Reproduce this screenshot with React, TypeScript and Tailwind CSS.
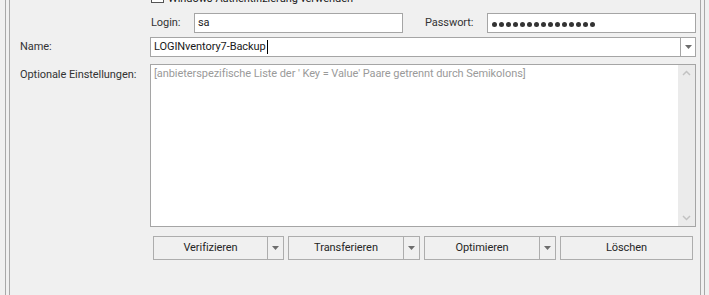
import React from 'react';

const font = { fontFamily: 'Roboto, "Liberation Sans", sans-serif' };

const Caret: React.FC = () => (
  <svg width="7" height="4" viewBox="0 0 7 4" className="shrink-0">
    <path d="M0 0h7L3.5 4z" fill="#6d6d6d" />
  </svg>
);

const SplitButton: React.FC<{ label: string; w: string }> = ({ label, w }) => (
  <div className={`flex h-[24px] ${w} border border-[#adadad] bg-[#f0f0f0]`}>
    <div className="flex flex-1 items-center justify-center text-[#262626]">{label}</div>
    <div className="flex w-[16px] items-center justify-center border-l border-[#adadad]">
      <Caret />
    </div>
  </div>
);

export default function App() {
  return (
    <div
      className="flex h-[295px] w-[709px] overflow-hidden bg-[#f0f0f0] text-[11px] leading-[14px] tracking-[-0.07px] text-[#333]"
      style={font}
    >
      {/* left panel edge */}
      <div className="ml-[5px] w-[5px] shrink-0 border-x border-[#a8a8a8]" />

      <div className="flex flex-1 flex-col pl-[10px] pr-[4px]">
        {/* checkbox row, mostly scrolled out of view */}
        <div className="-mt-[10px] flex h-[13px] items-start pl-[131px]">
          <div className="h-[13px] w-[13px] shrink-0 border border-[#555] bg-white" />
          <span className="ml-[4px] mt-[2px] whitespace-nowrap text-[#1a1a1a]">
            Windows-Authentifizierung verwenden
          </span>
        </div>

        {/* credentials */}
        <div className="mt-[10px] flex h-[20px] items-center pl-[130px]">
          <span className="ml-[1px] w-[43px]">Login:</span>
          <div className="flex h-[20px] w-[209px] items-center border border-[#a5a5a5] bg-white pl-[3px] text-[#1a1a1a]">
            sa
          </div>
          <span className="ml-[22px] w-[62px]">Passwort:</span>
          <div className="flex h-[20px] w-[209px] items-center gap-[2px] border border-[#a5a5a5] bg-white pl-[4px] pt-[2px]">
            {Array.from({ length: 15 }).map((_, i) => (
              <span key={i} className="h-[5px] w-[5px] rounded-full bg-[#333]" />
            ))}
          </div>
        </div>

        {/* name */}
        <div className="mt-[4px] flex h-[20px] items-center">
          <span className="w-[130px]">Name:</span>
          <div className="flex h-[20px] flex-1 border border-[#a5a5a5] bg-white">
            <div className="flex flex-1 items-center pl-[3px] text-[#1a1a1a]">
              LOGINventory7-Backup
              <span className="ml-[1px] h-[14px] w-[1px] bg-black" />
            </div>
            <div className="flex w-[15px] items-center justify-center border-l border-[#a5a5a5]">
              <Caret />
            </div>
          </div>
        </div>

        {/* options */}
        <div className="mt-[7px] flex h-[163px]">
          <span className="mt-[4px] w-[130px] whitespace-nowrap">Optionale Einstellungen:</span>
          <div className="flex flex-1 border border-[#a5a5a5] bg-white">
            <div className="flex-1 pl-[3px] pt-[2px] text-[#9a9a9a] whitespace-nowrap">
              [anbieterspezifische Liste der ' Key = Value' Paare getrennt durch Semikolons]
            </div>
            <div className="flex w-[17px] flex-col items-center justify-between bg-[#ebebeb] py-[5px]">
              <svg width="9" height="6" viewBox="0 0 9 6">
                <path d="M1 5l3.5-3.5L8 5" stroke="#c2c2c2" strokeWidth="1.5" fill="none" />
              </svg>
              <svg width="9" height="6" viewBox="0 0 9 6">
                <path d="M1 1l3.5 3.5L8 1" stroke="#c2c2c2" strokeWidth="1.5" fill="none" />
              </svg>
            </div>
          </div>
        </div>

        {/* actions */}
        <div className="mt-[9px] flex gap-[4px] pl-[133px]">
          <SplitButton label="Verifizieren" w="w-[131px]" />
          <SplitButton label="Transferieren" w="w-[132px]" />
          <SplitButton label="Optimieren" w="w-[132px]" />
          <div className="flex h-[24px] w-[133px] items-center justify-center border border-[#adadad] bg-[#f0f0f0] text-[#262626]">
            Löschen
          </div>
        </div>
      </div>

      {/* right panel edge */}
      <div className="mr-[4px] w-[5px] shrink-0 border-x border-[#a8a8a8]" />
    </div>
  );
}
